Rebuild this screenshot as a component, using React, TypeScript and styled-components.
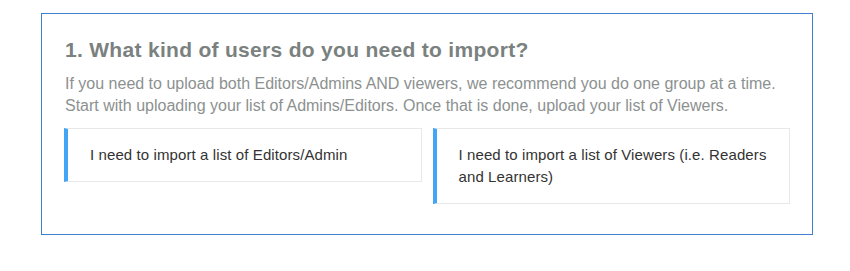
import React from 'react';
import styled, { createGlobalStyle } from 'styled-components';

const GlobalStyle = createGlobalStyle`
  body {
    margin: 0;
    background: #ffffff;
    font-family: "Liberation Sans", Arial, sans-serif;
  }
`;

const Page = styled.div`
  padding: 13px 37px 36px 41px;
`;

const Panel = styled.section`
  border: 1px solid #3f80d0;
  padding: 23px 22px 30px 22px;
`;

const Title = styled.h2`
  margin: 0 0 10px 1px;
  font-size: 21px;
  font-weight: 700;
  line-height: 26px;
  letter-spacing: 0.3px;
  color: #7a817f;
`;

const Intro = styled.p`
  margin: 0 0 11px 1px;
  font-size: 16px;
  line-height: 22px;
  color: #8c9190;
`;

const Choices = styled.div`
  display: flex;
  align-items: flex-start;
  gap: 11px;
`;

const Choice = styled.button`
  flex: 1;
  text-align: left;
  background: #ffffff;
  border: 1px solid #e8e8e8;
  border-left: 4px solid #42a5f5;
  padding: 15px 22px 15px 22px;
  font-family: inherit;
  font-size: 15px;
  line-height: 22px;
  letter-spacing: 0.1px;
  color: #333333;
  cursor: pointer;
`;

export default function App() {
  return (
    <>
      <GlobalStyle />
      <Page>
        <Panel>
          <Title>1. What kind of users do you need to import?</Title>
          <Intro>
            If you need to upload both Editors/Admins AND viewers, we recommend you do one group at a time.
            <br />
            Start with uploading your list of Admins/Editors. Once that is done, upload your list of Viewers.
          </Intro>
          <Choices>
            <Choice>I need to import a list of Editors/Admin</Choice>
            <Choice>I need to import a list of Viewers (i.e. Readers and Learners)</Choice>
          </Choices>
        </Panel>
      </Page>
    </>
  );
}
